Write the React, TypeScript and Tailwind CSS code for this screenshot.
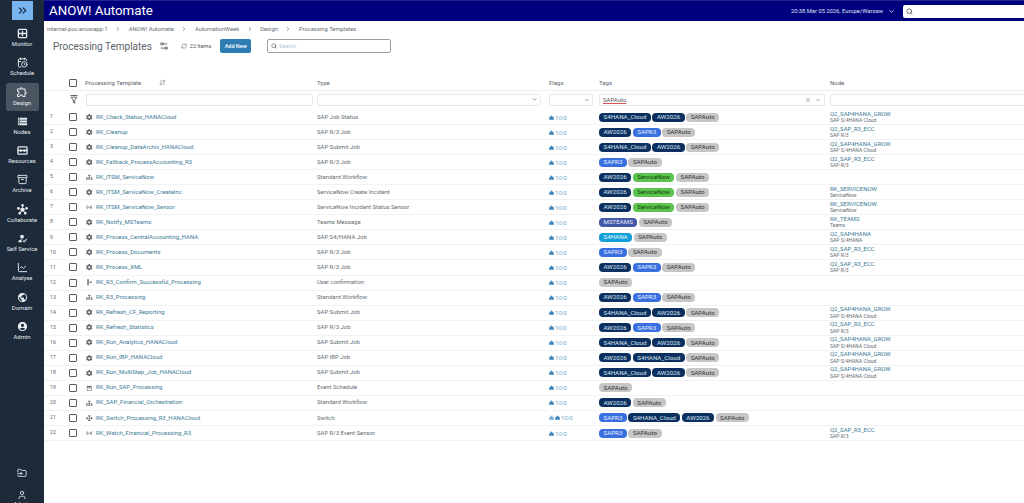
import { Archive, ArrowDownUp, CalendarClock, ChevronDown, ChevronRight, ChevronsRight, FolderInput, LineChart, RefreshCw, Search, Settings2, User, X } from "lucide-react";
import { FaArrowsAlt, FaCog, FaSitemap } from "react-icons/fa";
import {
  MdAccountCircle,
  MdDateRange,
  MdHowToReg,
  MdHub,
  MdOutlineExtension,
  MdOutlineSchema,
  MdPublic,
  MdSensors,
  MdStorage,
} from "react-icons/md";

const fontStack = "font-['Roboto',sans-serif]";

// boxed cross, the Monitor and Resources glyphs in the reference
const MonitorIcon = () => (
  <svg width="11" height="11" viewBox="0 0 12 12" fill="none" stroke="currentColor" strokeWidth="1.4">
    <rect x="1.5" y="1.5" width="9" height="9" rx="1" />
    <path d="M1.5 6h9M6 3v6" />
  </svg>
);

const ResourcesIcon = () => (
  <svg width="11" height="11" viewBox="0 0 12 12" fill="none" stroke="currentColor" strokeWidth="1.4">
    <rect x="1" y="2" width="10" height="8" rx="1" />
    <path d="M1 6h10M4 4.5v3M8 4.5v3" />
  </svg>
);

const navItems = [
  { label: "Monitor", icon: MonitorIcon },
  { label: "Schedule", icon: () => <CalendarClock size={11} strokeWidth={2} /> },
  { label: "Design", icon: () => <MdOutlineExtension size={12} />, active: true },
  { label: "Nodes", icon: () => <MdStorage size={11} /> },
  { label: "Resources", icon: ResourcesIcon },
  { label: "Archive", icon: () => <Archive size={11} strokeWidth={2} /> },
  { label: "Collaborate", icon: () => <MdHub size={11} /> },
  { label: "Self Service", icon: () => <MdHowToReg size={11} /> },
  { label: "Analyse", icon: () => <LineChart size={11} strokeWidth={2} /> },
  { label: "Domain", icon: () => <MdPublic size={11} /> },
  { label: "Admin", icon: () => <MdAccountCircle size={11} /> },
];

const crumbs = ["internal-poc-anowapp-1", "ANOW! Automate", "AutomationWeek", "Design", "Processing Templates"];

const tagStyles: Record<string, string> = {
  S4HANA_Cloud: "bg-[#0b3060] text-[#dbe6f2]",
  AW2026: "bg-[#0b3060] text-[#dbe6f2]",
  SAPR3: "bg-[#3a6fe0] text-[#e8f0ff]",
  SAPAuto: "bg-[#c6c6c6] text-[#333333]",
  ServiceNow: "bg-[#5cc44e] text-[#10400c]",
  MSTEAMS: "bg-[#4358a8] text-[#e8ecf8]",
  S4HANA: "bg-[#14a0d8] text-[#e8f6fc]",
};

const S4 = "SAP S/4HANA Cloud";
const GROW = "Q2_SAP4HANA_GROW";
const ECC = "Q2_SAP_R3_ECC";

type IconKind = "cog" | "flow" | "sensor" | "user" | "event" | "switch";

const rows: {
  icon: IconKind;
  name: string;
  type: string;
  tags: string[];
  node?: string;
  sub?: string;
  wide?: boolean;
}[] = [
  { icon: "cog", name: "RK_Check_Status_HANACloud", type: "SAP Job Status", tags: ["S4HANA_Cloud", "AW2026", "SAPAuto"], node: GROW, sub: S4 },
  { icon: "cog", name: "RK_Cleanup", type: "SAP R/3 Job", tags: ["AW2026", "SAPR3", "SAPAuto"], node: ECC, sub: "SAP R/3" },
  { icon: "cog", name: "RK_Cleanup_DataArchiv_HANACloud", type: "SAP Submit Job", tags: ["S4HANA_Cloud", "AW2026", "SAPAuto"], node: GROW, sub: S4 },
  { icon: "cog", name: "RK_Fallback_ProcessAccounting_R3", type: "SAP R/3 Job", tags: ["SAPR3", "SAPAuto"], node: ECC, sub: "SAP R/3" },
  { icon: "flow", name: "RK_ITSM_ServiceNow", type: "Standard Workflow", tags: ["AW2026", "ServiceNow", "SAPAuto"] },
  { icon: "cog", name: "RK_ITSM_ServiceNow_CreateInc", type: "ServiceNow Create Incident", tags: ["AW2026", "ServiceNow", "SAPAuto"], node: "RK_SERVICENOW", sub: "ServiceNow" },
  { icon: "sensor", name: "RK_ITSM_ServiceNow_Sensor", type: "ServiceNow Incident Status Sensor", tags: ["AW2026", "ServiceNow", "SAPAuto"], node: "RK_SERVICENOW", sub: "ServiceNow" },
  { icon: "cog", name: "RK_Notify_MSTeams", type: "Teams Message", tags: ["MSTEAMS", "SAPAuto"], node: "RK_TEAMS", sub: "Teams" },
  { icon: "cog", name: "RK_Process_CentralAccounting_HANA", type: "SAP S4/HANA Job", tags: ["S4HANA", "SAPAuto"], node: "Q2_SAP4HANA", sub: "SAP S/4HANA" },
  { icon: "cog", name: "RK_Process_Documents", type: "SAP R/3 Job", tags: ["SAPR3", "SAPAuto"], node: ECC, sub: "SAP R/3" },
  { icon: "cog", name: "RK_Process_XML", type: "SAP R/3 Job", tags: ["AW2026", "SAPR3", "SAPAuto"], node: ECC, sub: "SAP R/3" },
  { icon: "user", name: "RK_R3_Confirm_Successful_Processing", type: "User confirmation", tags: ["SAPAuto"] },
  { icon: "flow", name: "RK_R3_Processing", type: "Standard Workflow", tags: ["AW2026", "SAPR3", "SAPAuto"] },
  { icon: "cog", name: "RK_Refresh_CF_Reporting", type: "SAP Submit Job", tags: ["S4HANA_Cloud", "AW2026", "SAPAuto"], node: GROW, sub: S4 },
  { icon: "cog", name: "RK_Refresh_Statistics", type: "SAP R/3 Job", tags: ["AW2026", "SAPR3", "SAPAuto"], node: ECC, sub: "SAP R/3" },
  { icon: "cog", name: "RK_Run_Analytics_HANACloud", type: "SAP Submit Job", tags: ["S4HANA_Cloud", "AW2026", "SAPAuto"], node: GROW, sub: S4 },
  { icon: "cog", name: "RK_Run_IBP_HANACloud", type: "SAP IBP Job", tags: ["AW2026", "S4HANA_Cloud", "SAPAuto"], node: GROW, sub: S4 },
  { icon: "cog", name: "RK_Run_MultiStep_Job_HANACloud", type: "SAP Submit Job", tags: ["S4HANA_Cloud", "AW2026", "SAPAuto"], node: GROW, sub: S4 },
  { icon: "event", name: "RK_Run_SAP_Processing", type: "Event Schedule", tags: ["SAPAuto"] },
  { icon: "flow", name: "RK_SAP_Financial_Orchestration", type: "Standard Workflow", tags: ["AW2026", "SAPAuto"] },
  { icon: "switch", name: "RK_Switch_Processing_R3_HANACloud", type: "Switch", tags: ["SAPR3", "S4HANA_Cloud", "AW2026", "SAPAuto"], wide: true },
  { icon: "sensor", name: "RK_Watch_Financial_Processing_R3", type: "SAP R/3 Event Sensor", tags: ["SAPR3", "SAPAuto"], node: ECC, sub: "SAP R/3" },
];

const rowIcons = {
  cog: FaCog,
  flow: FaSitemap,
  sensor: MdSensors,
  user: MdOutlineSchema,
  event: MdDateRange,
  switch: FaArrowsAlt,
};

const gridCols = "grid grid-cols-[25px_17px_10px_221px_232px_50px_231px_220px]";

const Checkbox = () => <span className="block h-[8px] w-[8px] rounded-[1px] border border-[#555b63] bg-white" />;

const Sidebar = () => (
  <aside className="flex h-full w-[44px] shrink-0 flex-col items-center bg-[#1d2a3a] pt-[1px] text-[#e8ecf0]">
    <button className="flex h-[19px] w-[21px] items-center justify-center bg-[#78b5ee] text-[#12233a]">
      <ChevronsRight size={13} strokeWidth={2} />
    </button>
    <nav className="mt-[4px] flex w-full flex-col items-center gap-[1.3px]">
      {navItems.map((item) => {
        const Icon = item.icon;
        return (
          <div
            key={item.label}
            className={`flex h-[28px] w-[33px] flex-col items-center justify-center rounded-[2px] ${item.active ? "bg-[#4a5561]" : ""}`}
          >
            <Icon />
            <span className="mt-[1px] text-[5.9px] leading-[8px] whitespace-nowrap">{item.label}</span>
          </div>
        );
      })}
    </nav>
    <div className="mt-auto flex flex-col items-center">
      <FolderInput size={10} strokeWidth={2} />
      <User size={10} strokeWidth={2} className="mt-[12px]" />
      <span className="h-[3px] text-[5.9px] leading-[8px]">Admin</span>
    </div>
  </aside>
);

const Header = () => (
  <header className="flex h-[21px] shrink-0 items-center border-t border-[#23238f] bg-[#00007f] pl-[5px] text-white">
    <span className="text-[13.3px] leading-none">ANOW! Automate</span>
    <span className="ml-auto text-[5.8px] text-[#dfe3f5]">20:38 Mar 05 2026, Europe/Warsaw</span>
    <ChevronDown size={7} strokeWidth={2.5} className="ml-[5px]" />
    <div className="ml-[8px] flex h-[13px] w-[121px] items-center rounded-l-[2px] bg-white pl-[3px] text-[#444]">
      <Search size={7} strokeWidth={2.5} />
    </div>
  </header>
);

const Crumbs = () => (
  <div className="flex h-[16px] items-center pl-[3px] text-[5.8px] text-[#666c73]">
    {crumbs.map((c, i) => (
      <span key={c} className="flex items-center whitespace-nowrap">
        {i > 0 && <ChevronRight size={6} strokeWidth={2.5} className="mx-[7.5px] text-[#555]" />}
        {c}
      </span>
    ))}
  </div>
);

const Toolbar = () => (
  <div className="flex h-[18px] items-center pl-[9px]">
    <h1 className="text-[10px] text-[#5c6269]">Processing Templates</h1>
    <Settings2 size={10} className="ml-[7px] text-[#555]" />
    <RefreshCw size={6} className="ml-[12px] text-[#666]" />
    <span className="ml-[3px] text-[5.5px] text-[#555]">22 Items</span>
    <button className="ml-[9px] flex h-[14px] w-[31px] items-center justify-center rounded-[2px] bg-[#2d7db3] text-[5.5px] font-medium text-white">
      Add New
    </button>
    <div className="ml-[16px] flex h-[14px] w-[124px] items-center rounded-[2px] border border-[#9aa0a6] pl-[3px]">
      <Search size={6} strokeWidth={2.5} className="text-[#555]" />
      <span className="ml-[2px] text-[5.5px] text-[#b8c4d0]">Search</span>
    </div>
  </div>
);

const TagPill = ({ tag }: { tag: string }) => (
  <span className={`flex h-[9px] items-center rounded-[4px] px-[4.5px] text-[6.2px] leading-none whitespace-nowrap ${tagStyles[tag]}`}>
    {tag}
  </span>
);

// small filled glyph of the Flags column
const FlagIcon = ({ faded }: { faded?: boolean }) => (
  <svg width="5" height="5" viewBox="0 0 10 10" className={faded ? "mr-[1px] text-[#7fb0d2]" : "text-[#3f86bd]"} fill="currentColor">
    <path d="M5 0.5 7 3.5H9L10 9.5H0L1 3.5H3Z" />
  </svg>
);

const Flags = ({ wide }: { wide?: boolean }) => (
  <span className="flex items-center text-[6px] text-[#6aa5cc]">
    {wide && <FlagIcon faded />}
    <FlagIcon />
    <span className="ml-[1px]">1⊙0</span>
  </span>
);

const Table = () => (
  <div className="mt-[20px] w-[1006px]">
    <div className={`${gridCols} h-[16px] items-center border-b border-[#eef0f1] text-[6px] text-[#5c6269]`}>
      <span />
      <Checkbox />
      <span className="col-span-2 -ml-[1px] flex w-[81px] items-center justify-between">
        Processing Template
        <ArrowDownUp size={7} className="text-[#777]" />
      </span>
      <span>Type</span>
      <span>Flags</span>
      <span>Tags</span>
      <span>Node</span>
    </div>
    <div className={`${gridCols} mb-[2px] h-[17px] items-center`}>
      <span />
      <svg width="8" height="9" viewBox="0 0 8 9" fill="none" stroke="#555" strokeWidth="0.9" className="ml-[1px]">
        <path d="M0.5 0.5h7M1 2.2h6L4.7 5v3.2L3.3 7.5V5Z" />
      </svg>
      <span className="col-span-2 mr-[4px] h-[12px] rounded-[2px] border border-[#e6e8ea]" />
      <span className="mr-[8px] flex h-[12px] items-center justify-end rounded-[2px] border border-[#e6e8ea] pr-[2px]">
        <ChevronDown size={7} strokeWidth={2} className="text-[#555]" />
      </span>
      <span className="mr-[6px] flex h-[12px] items-center justify-end rounded-[2px] border border-[#e6e8ea] pr-[2px]">
        <ChevronDown size={6} strokeWidth={2} className="text-[#555]" />
      </span>
      <span className="mr-[5px] flex h-[12px] items-center rounded-[2px] border border-[#e6e8ea] pr-[3px] pl-[3px] text-[6px] text-[#555]">
        <span className="underline decoration-[#d9534f]">SAPAuto</span>
        <X size={6} className="ml-auto text-[#555]" />
        <ChevronDown size={6} strokeWidth={2} className="ml-[4px] text-[#555]" />
      </span>
      <span className="h-[12px] rounded-[2px] border border-[#e6e8ea]" />
    </div>
    <div>
      {rows.map((row, i) => {
        const Icon = rowIcons[row.icon];
        return (
          <div key={row.name} className={`${gridCols} h-[15.05px] items-center border-b border-[#f0f2f3] text-[5.95px]`}>
            <span className="pl-[6px] text-[5.2px] text-[#666]">{i + 1}</span>
            <Checkbox />
            <Icon size={6.5} className="text-[#5f656b]" />
            <span className="whitespace-nowrap text-[#3c7a96]">{row.name}</span>
            <span className="whitespace-nowrap text-[#666c73]">{row.type}</span>
            <Flags wide={row.wide} />
            <span className="flex items-center gap-[1.5px]">
              {row.tags.map((t) => (
                <TagPill key={t} tag={t} />
              ))}
            </span>
            <span className="flex flex-col leading-[6.5px] whitespace-nowrap">
              {row.node && <span className="text-[5.95px] text-[#3c7a96]">{row.node}</span>}
              {row.sub && <span className="text-[5px] text-[#666c73]">{row.sub}</span>}
            </span>
          </div>
        );
      })}
    </div>
  </div>
);

export default function App() {
  return (
    <div className={`${fontStack} flex h-[503px] w-[1024px] overflow-hidden bg-white`}>
      <Sidebar />
      <main className="flex min-w-0 flex-1 flex-col overflow-hidden">
        <Header />
        <Crumbs />
        <Toolbar />
        <Table />
      </main>
    </div>
  );
}
